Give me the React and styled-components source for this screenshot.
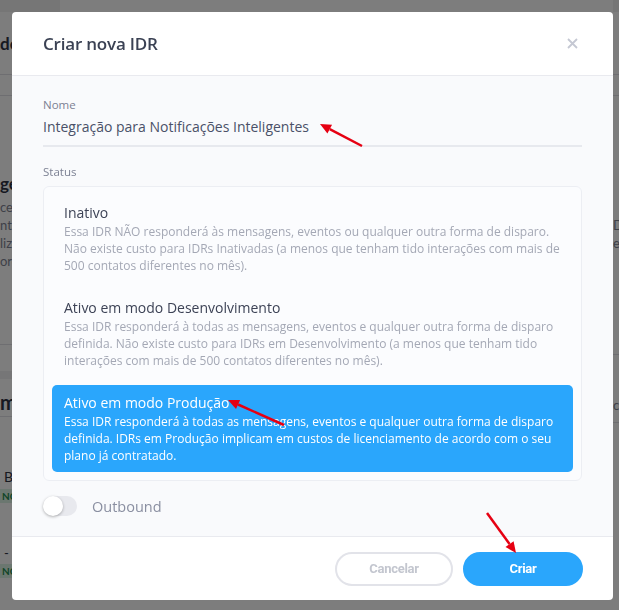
import React, { useState } from "react";
import styled, { createGlobalStyle } from "styled-components";

const GlobalStyle = createGlobalStyle`
  html, body {
    margin: 0;
    padding: 0;
    background: #ffffff;
    font-family: "Open Sans", "Liberation Sans", sans-serif;
  }
  * { box-sizing: border-box; }
`;

// the page that sits under the dark overlay
const Page = styled.div`
  height: 610px;
  overflow: hidden;
  display: flex;
  justify-content: space-between;
  background: #fafafa;
`;

const Strip = styled.div`
  width: ${({ w }) => w}px;
  display: flex;
  flex-direction: column;
  white-space: nowrap;
  overflow: hidden;
`;

const Frag = styled.div`
  height: ${({ h }) => h}px;
  line-height: ${({ h }) => h}px;
  margin-top: ${({ mt }) => mt || 0}px;
  padding-left: ${({ pl }) => pl || 0}px;
  font-size: ${({ size }) => size || 13}px;
  font-weight: ${({ bold }) => (bold ? 700 : 400)};
  color: ${({ dark, bold }) => (bold || dark ? "#2e3242" : "#7d8190")};
  font-family: "Lato", "Open Sans", sans-serif;
  border-bottom: ${({ line }) => (line ? "1px solid #dcdde2" : "none")};
  background: ${({ bg }) => bg || "transparent"};
`;

const Badge = styled.span`
  display: inline-block;
  margin-left: -4px;
  background: #d6efe0;
  color: #1f8a4d;
  font-size: 10px;
  font-weight: 700;
  line-height: 14px;
  padding: 0 6px;
`;

const Overlay = styled.div`
  position: fixed;
  inset: 0;
  background: rgba(0, 0, 0, 0.5);
  padding: 12px 6px 10px 12px;
`;

const Modal = styled.div`
  width: 601px;
  height: 588px;
  background: #ffffff;
  border-radius: 4px;
  display: flex;
  flex-direction: column;
  overflow: hidden;
`;

const Header = styled.header`
  height: 64px;
  flex: none;
  display: flex;
  align-items: center;
  justify-content: space-between;
  padding: 0 34px 0 31px;
  border-bottom: 1px solid #e9eaef;
`;

const Title = styled.h2`
  margin: 0;
  font-size: 17px;
  font-weight: 600;
  color: #3b4254;
  letter-spacing: -0.2px;
`;

const Close = styled.button`
  border: none;
  background: none;
  padding: 0;
  width: 14px;
  height: 14px;
  display: flex;
  align-items: center;
  justify-content: center;
  cursor: pointer;
`;

const Body = styled.div`
  flex: 1;
  background: #f9fafc;
  padding: 21px 31px 0 31px;
  display: flex;
  flex-direction: column;
  border-bottom: 1px solid #e9eaef;
`;

const Label = styled.label`
  font-size: 11.5px;
  color: #7c8193;
  line-height: 16px;
`;

const Input = styled.input`
  border: none;
  background: transparent;
  border-bottom: 2px solid #e7e9ee;
  font-family: inherit;
  font-size: 14px;
  color: #4a5168;
  padding: 4px 0 9px;
  margin-bottom: 17px;
  outline: none;
`;

const OptionList = styled.div`
  margin-top: 6px;
  border: 1px solid #eceef3;
  border-radius: 6px;
  background: #fbfcfe;
  padding: 8px;
  display: flex;
  flex-direction: column;
  gap: 8px;
`;

const Option = styled.div`
  padding: 8px 12px;
  border-radius: 5px;
  background: ${({ active }) => (active ? "#2aa6fc" : "transparent")};
  cursor: pointer;
`;

const OptionTitle = styled.div`
  font-size: 14px;
  line-height: 20px;
  color: ${({ active }) => (active ? "#ffffff" : "#3d4356")};
`;

const OptionText = styled.div`
  font-size: 12px;
  line-height: 17px;
  color: ${({ active }) => (active ? "#ffffff" : "#a4a8b5")};
`;

const ToggleRow = styled.div`
  margin-top: 15px;
  display: flex;
  align-items: center;
  gap: 15px;
`;

const Track = styled.div`
  width: 34px;
  height: 20px;
  border-radius: 10px;
  background: #e8e9ee;
  display: flex;
  align-items: center;
  justify-content: ${({ on }) => (on ? "flex-end" : "flex-start")};
  cursor: pointer;
`;

const Knob = styled.div`
  width: 20px;
  height: 20px;
  border-radius: 50%;
  background: #ffffff;
  box-shadow: 0 1px 3px rgba(0, 0, 0, 0.3);
`;

const ToggleLabel = styled.span`
  font-size: 14.5px;
  color: #8a8fa1;
`;

const Footer = styled.footer`
  height: 63px;
  flex: none;
  display: flex;
  align-items: center;
  justify-content: flex-end;
  gap: 10px;
  padding: 0 30px 0 0;
`;

const Button = styled.button`
  height: 34px;
  width: ${({ w }) => w}px;
  border-radius: 17px;
  font-family: "Roboto", "Liberation Sans", sans-serif;
  font-size: 13px;
  font-weight: 700;
  letter-spacing: -0.3px;
  cursor: pointer;
  border: 2px solid ${({ primary }) => (primary ? "#2aa6fc" : "#e2e3e9")};
  background: ${({ primary }) => (primary ? "#2aa6fc" : "#ffffff")};
  color: ${({ primary }) => (primary ? "#ffffff" : "#c3c6cf")};
`;

const Marks = styled.svg`
  position: fixed;
  inset: 0;
  pointer-events: none;
`;

const options = [
  {
    id: "inativo",
    title: "Inativo",
    text: "Essa IDR NÃO responderá às mensagens, eventos ou qualquer outra forma de disparo. Não existe custo para IDRs Inativadas (a menos que tenham tido interações com mais de 500 contatos diferentes no mês).",
  },
  {
    id: "dev",
    title: "Ativo em modo Desenvolvimento",
    text: "Essa IDR responderá à todas as mensagens, eventos e qualquer outra forma de disparo definida. Não existe custo para IDRs em Desenvolvimento (a menos que tenham tido interações com mais de 500 contatos diferentes no mês).",
  },
  {
    id: "prod",
    title: "Ativo em modo Produção",
    text: "Essa IDR responderá à todas as mensagens, eventos e qualquer outra forma de disparo definida. IDRs em Produção implicam em custos de licenciamento de acordo com o seu plano já contratado.",
  },
];

const Arrow = ({ x1, y1, x2, y2 }) => {
  const a = Math.atan2(y2 - y1, x2 - x1);
  const len = 11;
  const w = 5;
  const bx = x2 - Math.cos(a) * len;
  const by = y2 - Math.sin(a) * len;
  const px = -Math.sin(a) * w;
  const py = Math.cos(a) * w;
  return (
    <g>
      <line x1={x1} y1={y1} x2={bx} y2={by} stroke="#e60012" strokeWidth="2.5" />
      <polygon
        points={`${x2},${y2} ${bx + px},${by + py} ${bx - px},${by - py}`}
        fill="#e60012"
      />
    </g>
  );
};

const App = () => {
  const [name, setName] = useState("Integração para Notificações Inteligentes");
  const [status, setStatus] = useState("prod");
  const [outbound, setOutbound] = useState(false);

  return (
    <>
      <GlobalStyle />
      <Page>
        <Strip w={60}>
          <Frag h={12} bg="#ececec" />
          <Frag h={63} size={17} bold line>de</Frag>
          <Frag h={21} line />
          <Frag h={24} mt={76} size={17} bold>ge</Frag>
          <Frag h={18} mt={2}>ce</Frag>
          <Frag h={18}>nta</Frag>
          <Frag h={18}>liz</Frag>
          <Frag h={18}>orc</Frag>
          <Frag h={1} mt={74} line />
          <Frag h={8} mt={26} bg="#ededee" />
          <Frag h={30} mt={8} size={20} bold line>m</Frag>
          <Frag h={20} mt={50} size={14} pl={4} dark>B</Frag>
          <Frag h={16}>
            <Badge>NOD</Badge>
          </Frag>
          <Frag h={18} mt={41} pl={4} dark>-</Frag>
          <Frag h={16}>
            <Badge>NOD</Badge>
          </Frag>
        </Strip>
        <Strip w={6}>
          <Frag h={12} bg="#ececec" />
          <Frag h={63} line />
          <Frag h={21} line />
          <Frag h={18} mt={120}>D</Frag>
          <Frag h={18}>es</Frag>
          <Frag h={1} mt={102} line />
          <Frag h={36} mt={32} line>c</Frag>
        </Strip>
      </Page>

      <Overlay>
        <Modal>
          <Header>
            <Title>Criar nova IDR</Title>
            <Close aria-label="Fechar">
              <svg width="11" height="11" viewBox="0 0 11 11">
                <path d="M1 1 L10 10 M10 1 L1 10" stroke="#c5c8d3" strokeWidth="1.8" />
              </svg>
            </Close>
          </Header>

          <Body>
            <Label>Nome</Label>
            <Input value={name} onChange={(e) => setName(e.target.value)} />

            <Label>Status</Label>
            <OptionList>
              {options.map((opt) => (
                <Option
                  key={opt.id}
                  active={status === opt.id}
                  onClick={() => setStatus(opt.id)}
                >
                  <OptionTitle active={status === opt.id}>{opt.title}</OptionTitle>
                  <OptionText active={status === opt.id}>{opt.text}</OptionText>
                </Option>
              ))}
            </OptionList>

            <ToggleRow>
              <Track on={outbound} onClick={() => setOutbound(!outbound)}>
                <Knob />
              </Track>
              <ToggleLabel>Outbound</ToggleLabel>
            </ToggleRow>
          </Body>

          <Footer>
            <Button w={118}>Cancelar</Button>
            <Button w={120} primary>
              Criar
            </Button>
          </Footer>
        </Modal>
      </Overlay>

      <Marks width="619" height="610" viewBox="0 0 619 610">
        <Arrow x1={362} y1={146} x2={320} y2={124} />
        <Arrow x1={284} y1={425} x2={228} y2={400} />
        <Arrow x1={487} y1={513} x2={516} y2={553} />
      </Marks>
    </>
  );
};

export default App;
